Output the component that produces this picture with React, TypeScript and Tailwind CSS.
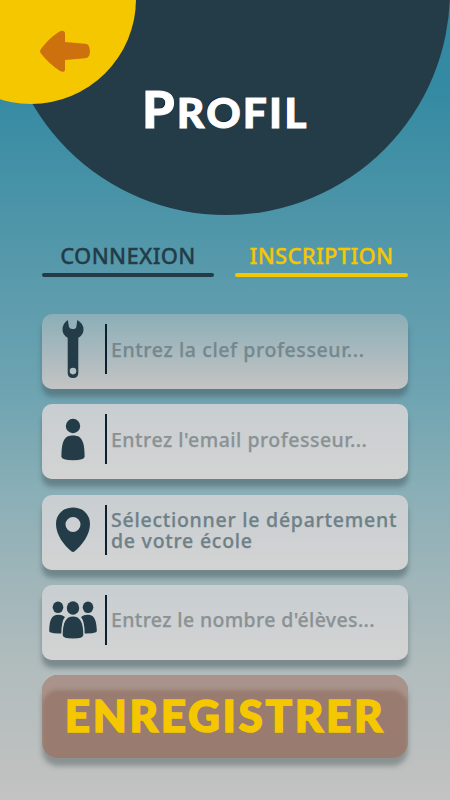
import React, { useState } from 'react';
import clsx from 'clsx';

type Tab = 'connexion' | 'inscription';

function ArrowIcon() {
  return (
    <svg className="absolute left-[40px] top-[30px]" width="51" height="43" viewBox="0 0 51 43">
      <path
        fill="#cd700e"
        d="M0.800 19.300 C6 12 14 4.500 20 1.200 C22.500 0 25 1 25 3.500 V12 L45 13.800 Q48.500 14 49.200 17 Q50.600 21.500 49.200 25.500 Q48.300 28 45 28.300 L25 30 V39 C25 42 22.500 42.500 20 41 C13 36.500 6 30 0.800 23.300 Q-0.600 21.300 0.800 19.300Z"
      />
    </svg>
  );
}

function WrenchIcon() {
  return (
    <svg width="22" height="60" viewBox="0 0 22 60">
      <path
        fill="#233c48"
        fillRule="evenodd"
        d="M5.800 1 L7 8 Q7.500 10 10.500 10 Q14 10 14.300 8 L15.300 1 Q21.500 4.500 21.500 10.500 Q21.500 16 16.300 18.800 V54 Q16.300 59 11 59 Q5.700 59 5.700 54 V18.800 Q0.500 16 0.500 10.500 Q0.500 4.500 5.800 1Z M11 48.800 A3.300 3.300 0 1 0 11 55.400 A3.300 3.300 0 1 0 11 48.800Z"
      />
    </svg>
  );
}

function PersonIcon() {
  return (
    <svg width="24" height="43" viewBox="0 0 24 43">
      <g fill="#233c48">
        <circle cx="12" cy="8" r="7.200" />
        <path d="M12 17.500 C19.500 17.500 23.500 21 23.600 38.500 Q23.500 42.300 12 42.300 Q0.500 42.300 0.400 38.500 C0.500 21 4.500 17.500 12 17.500Z" />
      </g>
    </svg>
  );
}

function PinIcon() {
  return (
    <svg width="34" height="46" viewBox="0 0 34 46">
      <path
        fill="#233c48"
        fillRule="evenodd"
        d="M17 0.500 C27 0.500 34 7.500 34 17 C34 28 26 38 18.700 44.300 Q17 45.700 15.300 44.300 C8 38 0 28 0 17 C0 7.500 7 0.500 17 0.500Z M17 10 A7.500 7.500 0 1 0 17 25 A7.500 7.500 0 1 0 17 10Z"
      />
    </svg>
  );
}

function GroupIcon() {
  return (
    <svg width="48" height="38" viewBox="0 0 48 38">
      <g fill="#233c48">
        <ellipse cx="9" cy="6.300" rx="5.300" ry="5.800" />
        <ellipse cx="39" cy="6.300" rx="5.300" ry="5.800" />
        <ellipse cx="24" cy="7" rx="6.200" ry="6.700" />
        <path d="M9 13.700 Q13 13.500 16 16 Q12.500 20 12.300 32.500 Q5 32.800 1 31.300 Q0 31 0.200 29 C0.700 18 3 14 9 13.700Z" />
        <path d="M39 13.700 Q35 13.500 32 16 Q35.500 20 35.700 32.500 Q43 32.800 47 31.300 Q48 31 47.800 29 C47.300 18 45 14 39 13.700Z" />
        <path d="M24 15.500 C31 15.500 34.200 21 34.300 34 Q34.300 37.500 24 37.500 Q13.700 37.500 13.700 34 C13.800 21 17 15.500 24 15.500Z" />
      </g>
    </svg>
  );
}

interface FieldProps {
  icon: React.ReactNode;
  label: string;
  className: string;
  textClassName: string;
}

function Field({ icon, label, className, textClassName }: FieldProps) {
  return (
    <div
      className={clsx(
        'flex h-[75px] items-center rounded-[10px] pb-[5px] shadow-[0_8px_5px_0_rgba(70,90,95,0.5)]',
        className
      )}
    >
      <div className="flex w-[62px] shrink-0 justify-center">{icon}</div>
      <div className="ml-px h-[50px] w-[2px] shrink-0 bg-[#0d2030]" />
      <p className={clsx('ml-1 text-[19.5px] leading-[21px] font-medium whitespace-pre [-webkit-text-stroke:0.25px_currentColor]', textClassName)}>
        {label}
      </p>
    </div>
  );
}

export default function App() {
  const [tab, setTab] = useState<Tab>('inscription');

  return (
    <div className="relative flex h-[800px] w-[450px] flex-col overflow-hidden bg-[linear-gradient(180deg,#3088a2_0px,#368ba3_100px,#5096a9_230px,#5d9cad_300px,#6fa4b2_395px,#88aeb6_485px,#9eb5b9_575px,#b1bcbd_665px,#bfc1c0_775px,#c3c3c2_800px)] font-['Noto_Sans',sans-serif]">
      {/* Header */}
      <header className="h-[240px] shrink-0">
        <div className="absolute -top-[233px] left-[2px] size-[448px] rounded-full bg-[#233c48]" />
        <button className="absolute -top-[106px] -left-[74px] size-[209.500px] rounded-full bg-[#f5c700]" aria-label="Retour" />
        <div className="pointer-events-none">
          <ArrowIcon />
        </div>
        <h1 className="relative ml-[142px] pt-[76px] font-['Lato',sans-serif] text-[52px] leading-[64px] font-black tracking-[2.2px] whitespace-nowrap text-white [-webkit-text-stroke:1px_#fff] [text-shadow:-1px_-1px_0_#0b1230]">
          P<span className="text-[42.5px]">ROFIL</span>
        </h1>
      </header>

      {/* Tabs */}
      <nav className="mx-[42px] flex h-[37px] shrink-0 justify-between text-[22px] font-medium">
        <button
          onClick={() => setTab('connexion')}
          className="flex w-[172px] flex-col items-center justify-between text-[#233c48]"
        >
          <span className="leading-[31px] tracking-[0.3px] [-webkit-text-stroke:0.3px_currentColor]">CONNEXION</span>
          <span className="h-1 w-full shrink-0 rounded-full bg-current" />
        </button>
        <button
          onClick={() => setTab('inscription')}
          className={clsx(
            'flex w-[173px] flex-col items-center justify-between',
            tab === 'inscription' ? 'text-[#f5c700]' : 'text-[#233c48]'
          )}
        >
          <span className="leading-[31px] tracking-[0.3px] [-webkit-text-stroke:0.3px_currentColor]">INSCRIPTION</span>
          <span className="h-1 w-full shrink-0 rounded-full bg-current" />
        </button>
      </nav>

      {/* Form */}
      <form className="mx-[42px] mt-[37px] flex flex-col gap-[15.300px]" onSubmit={(e) => e.preventDefault()}>
        <Field
          icon={<WrenchIcon />}
          label="Entrez la clef professeur..."
          className="bg-linear-to-b from-[#8baeb7] to-[#c4c4c4]"
          textClassName="text-[#74888e] tracking-[0.6px]"
        />
        <Field
          icon={<PersonIcon />}
          label="Entrez l'email professeur..."
          className="bg-linear-to-b from-[#c8ced1] to-[#d3d3d3]"
          textClassName="text-[#8b9294] tracking-[0.5px]"
        />
        <Field
          icon={<PinIcon />}
          label={'Sélectionner le département\nde votre école'}
          className="bg-linear-to-b from-[#c8ced1] to-[#d3d3d3]"
          textClassName="text-[#6e8188] tracking-[0.75px]"
        />
        <Field
          icon={<GroupIcon />}
          label="Entrez le nombre d'élèves..."
          className="bg-linear-to-b from-[#c8ced1] to-[#d3d3d3]"
          textClassName="text-[#8b9294] tracking-[0.36px]"
        />
        <button className="flex h-[83px] items-center justify-center rounded-[16px] bg-[#997b6f] pb-[3px] font-['Lato',sans-serif] text-[44px] font-black tracking-[2.700px] text-[#f5c700] shadow-[0_8px_5px_0_rgba(90,100,102,0.5),inset_0_15px_4px_0_#a9938a] [-webkit-text-stroke:1.5px_#f5c700]">
          ENREGISTRER
        </button>
      </form>
    </div>
  );
}
